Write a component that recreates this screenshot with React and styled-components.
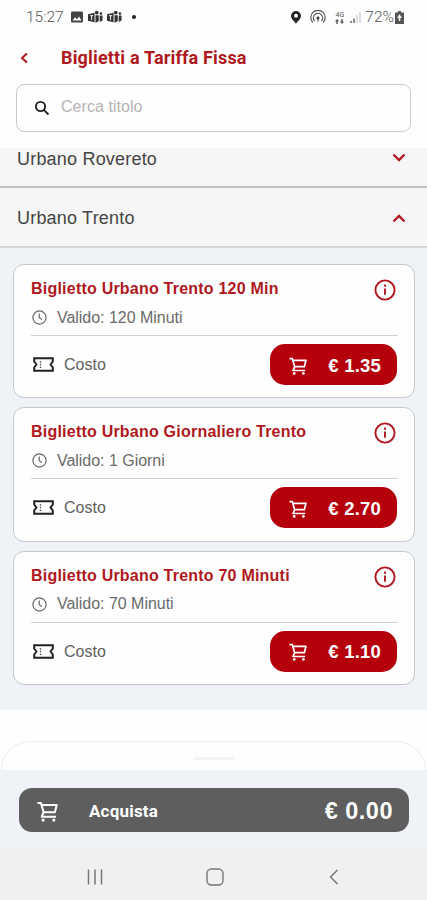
import React from 'react'
import styled, { createGlobalStyle } from 'styled-components'

const GlobalStyle = createGlobalStyle`
  * {
    box-sizing: border-box;
  }
  body {
    margin: 0;
    background: #fff;
    font-family: 'Liberation Sans', Arial, sans-serif;
  }
`

const Screen = styled.div`
  display: flex;
  flex-direction: column;
  width: 427px;
  height: 900px;
  overflow: hidden;
  background: #fefefe;
`

const StatusBar = styled.div`
  display: flex;
  align-items: center;
  justify-content: space-between;
  height: 34px;
  padding: 0 23px 0 26px;
  color: #777;
  font-family: Roboto, sans-serif;
  font-size: 15.5px;
`

const StatusGroup = styled.div`
  display: flex;
  align-items: center;
`

const Time = styled.span`
  width: 45px;
  font-weight: 300;
  color: #555;
`

const Battery = styled.span`
  margin: 0 1px 0 4px;
  font-weight: 300;
  font-size: 15.5px;
  color: #555;
`

const Header = styled.header`
  display: flex;
  align-items: center;
  height: 46px;
  padding: 1px 19px 0;
`

const Title = styled.h1`
  margin: 0 0 0 30px;
  color: #b01820;
  font-family: Roboto, sans-serif;
  font-size: 18px;
  font-weight: 700;
  line-height: 24px;
  letter-spacing: 0.17px;
`

const SearchBox = styled.div`
  display: flex;
  align-items: center;
  flex: none;
  height: 48px;
  margin: 4px 16px 0 16px;
  padding: 0 17px;
  border: 1.5px solid #ccc;
  border-radius: 8px;
  color: #b4b4b4;
  font-size: 16px;
  letter-spacing: 0.05px;

  svg {
    margin-right: 11px;
  }
  span {
    margin-top: -2px;
  }
`

const List = styled.main`
  display: flex;
  flex-direction: column;
  flex: none;
  height: 562px;
  margin-top: 16px;
  overflow: hidden;
  background: #eff3f7;
`

const Section = styled.div`
  display: flex;
  align-items: ${props => (props.$cut ? 'flex-start' : 'center')};
  justify-content: space-between;
  flex: none;
  height: ${props => (props.$cut ? 40 : 60)}px;
  padding: ${props => (props.$cut ? 1 : 2)}px 21px 0 17px;
  border-bottom: 2px solid ${props => (props.$cut ? '#bfc0c1' : '#d3d5d7')};
  background: #f6f6f6;
  color: #444;
  font-size: 18px;
  line-height: 20px;
  letter-spacing: 0.2px;
`

const SectionIcon = styled.span`
  display: flex;
  align-items: center;
  height: ${props => (props.$cut ? 17 : 20)}px;
`

const Cards = styled.div`
  display: flex;
  flex-direction: column;
  gap: 9px;
  padding: 16px 12px 0 13px;
`

const Card = styled.article`
  height: 134.4px;
  padding: 14px 16px 0 17px;
  border: 1.5px solid #c5c8ca;
  border-radius: 11px;
  background: #fefefe;
`

const CardHead = styled.div`
  display: flex;
  justify-content: space-between;
  height: 29px;

  svg {
    margin-right: 2px;
  }
`

const Name = styled.h2`
  margin: 0;
  color: #b01820;
  font-size: 16px;
  font-weight: 700;
  line-height: 20px;
  letter-spacing: 0.22px;
`

const Validity = styled.div`
  display: flex;
  align-items: center;
  height: 28px;
  padding-bottom: 8px;
  border-bottom: 1.5px solid #cfcfcf;
  color: #6a6a6a;
  font-size: 16px;
  letter-spacing: -0.03px;

  svg {
    margin: 0 10px 0 1px;
  }
`

const PriceRow = styled.div`
  display: flex;
  align-items: center;
  height: 41px;
  margin-top: 8px;
  padding: 0 1px 0 2px;
`

const CostLabel = styled.span`
  flex: 1;
  margin: 1px 0 0 10px;
  color: #606060;
  font-size: 16px;
`

const PriceButton = styled.button`
  display: flex;
  align-items: center;
  justify-content: space-between;
  width: 127px;
  height: 41px;
  padding: 2px 16px 0 19px;
  border: 0;
  border-radius: 15px;
  background: #b5000c;
  color: #fff;
  font-family: 'Liberation Sans', Arial, sans-serif;
  font-size: 18.5px;
  font-weight: 700;
  letter-spacing: 0.2px;
`

const Sheet = styled.div`
  display: flex;
  justify-content: center;
  flex: none;
  height: 29px;
  margin: 31px 1px 0;
  border: 1px solid #ededed;
  border-bottom: 0;
  border-radius: 29px 29px 0 0;
`

const Grip = styled.div`
  width: 42px;
  height: 3px;
  margin-top: 15px;
  border-radius: 2px;
  background: #f4f4f4;
`

const Footer = styled.footer`
  flex: none;
  height: 80px;
  padding: 18px 18px 0 19px;
  background: #eff3f7;
`

const BuyButton = styled.button`
  display: flex;
  align-items: center;
  width: 100%;
  height: 44px;
  padding: 2px 16px 0 18px;
  border: 0;
  border-radius: 13px;
  background: #5e5e5e;
  color: #fff;
`

const BuyLabel = styled.span`
  flex: 1;
  margin-left: 31px;
  font-family: Roboto, sans-serif;
  font-size: 17px;
  font-weight: 700;
  letter-spacing: 0.2px;
  text-align: left;
`

const Total = styled.span`
  font-family: 'Liberation Sans', Arial, sans-serif;
  font-size: 23.5px;
  font-weight: 700;
  letter-spacing: 0.5px;
`

const NavBar = styled.nav`
  display: flex;
  align-items: center;
  justify-content: space-between;
  flex: none;
  height: 50px;
  padding: 3px 87px 0 85px;
  background: #f0f0f0;

  svg:nth-child(2) {
    margin-right: 4px;
  }
`

const Chevron = ({ d, w, h, color = '#b01820', weight = 2 }) => (
  <svg width={w} height={h} viewBox={`0 0 ${w} ${h}`} fill='none' stroke={color} strokeWidth={weight}>
    <path d={d} />
  </svg>
)

const ChevronDown = () => <Chevron w={14} h={9} d='M1.5 1.5l5.500 5.500 5.500-5.500' weight={2.3} />
const ChevronUp = () => <Chevron w={14} h={9} d='M1.5 7.5l5.500-5.500 5.500 5.500' weight={2.3} />

const CartIcon = ({ size }) => (
  <svg width={size} height={size} viewBox='0 0 20 20' fill='none' stroke='#fff' strokeWidth='1.9'>
    <path d='M0.500 1.800h3.200l2.600 9h10.700l1.800-7H4.500M6.300 10.800l-1.800 4.200h13.500' strokeLinejoin='round' />
    <circle cx='5.800' cy='18.200' r='1.500' fill='#fff' stroke='none' />
    <circle cx='16' cy='18.200' r='1.500' fill='#fff' stroke='none' />
  </svg>
)

const TicketIcon = () => (
  <svg width='21' height='15' viewBox='0 0 21 15' fill='none' stroke='#222' strokeWidth='2'>
    <path d='M1.200 1.200h18.600v3.300l-2.200 3 2.200 3v3.300H1.200v-3.300l2.200-3-2.200-3z' />
    <path d='M7.500 4.200v1.500M7.500 6.800v1.500M7.500 9.400v1.500' stroke='#555' strokeWidth='1.400' />
  </svg>
)

const ClockIcon = () => (
  <svg width='15' height='15' viewBox='0 0 15 15' fill='none' stroke='#666' strokeWidth='1.2'>
    <circle cx='7.5' cy='7.5' r='6.6' />
    <path d='M7.2 3.5v4.2l2.8 1.9' />
  </svg>
)

const InfoIcon = () => (
  <svg width='22' height='22' viewBox='0 0 22 22' fill='none' stroke='#b01820' strokeWidth='1.9'>
    <circle cx='11' cy='11' r='9.6' />
    <path d='M11 9.5v6.3M11 5.6v2.1' />
  </svg>
)

const PhotoIcon = () => (
  <svg width='12' height='12' viewBox='0 0 12 12'>
    <rect y='0.5' width='12' height='11' rx='1.2' fill='#444' />
    <path d='M1.6 9.5l2.5-3.3 1.9 2 2-2.8 2.6 4.1z' fill='#fff' />
  </svg>
)

const TeamsIcon = () => (
  <svg width='15' height='14' viewBox='0 0 16 14' fill='#333'>
    <path d='M0 4l7-1.5v10L0 11z' />
    <circle cx='9.3' cy='2.2' r='2' />
    <circle cx='13.8' cy='3.2' r='1.4' />
    <path d='M8 5h3.5v6.2L8 13.5zM12.5 5.3H15.5v5.5l-3 1.5z' />
    <path d='M2 5.6h3.5M3.8 5.6v4.8' stroke='#fff' fill='none' />
  </svg>
)

const TeamsGroup = styled(StatusGroup)`
  gap: 4px;
  margin: 0 10px 0 5px;
`

const Dot = styled.i`
  width: 4px;
  height: 4px;
  border-radius: 50%;
  background: #222;
`

const PinIcon = () => (
  <svg width='10' height='13' viewBox='0 0 10 13'>
    <path d='M5 0a5 5 0 0 0-5 4.8C0 8 3.4 10 5 13c1.6-3 5-5 5-8.2A5 5 0 0 0 5 0z' fill='#222' />
    <circle cx='5' cy='4.7' r='2' fill='#fff' />
  </svg>
)

const HotspotIcon = () => (
  <svg width='16' height='14' viewBox='0 0 16 14' fill='none' stroke='#555' strokeWidth='1.2'>
    <path d='M2.800 12.500a7.200 7.200 0 1 1 10.400 0M4.600 11a4.600 4.600 0 1 1 6.800 0' />
    <circle cx='8' cy='8' r='1.5' fill='#333' stroke='none' />
    <path d='M8 8v3.500' />
  </svg>
)

const Network = styled.div`
  display: flex;
  flex-direction: column;
  align-items: center;
  width: 11px;
  margin-left: 8px;
  color: #555;
  font-size: 7px;
  line-height: 8px;
`

const ArrowsIcon = () => (
  <svg width='9' height='5' viewBox='0 0 9 5' fill='#555'>
    <path d='M0 2.500L2 0l2 2.500H2.700V5H1.300V2.500zM5 2.500L7 5l2-2.500H7.700V0H6.300v2.500z' />
  </svg>
)

const SignalIcon = () => (
  <svg width='12' height='13' viewBox='0 0 12 13'>
    <path d='M1 10h2v2H1zM4 7.5h2V12H4z' fill='#888' />
    <path d='M7 4h2v8H7zM10 1h2v11h-2z' fill='#ddd' />
  </svg>
)

const BatteryIcon = () => (
  <svg width='9' height='13' viewBox='0 0 9 13'>
    <path d='M3 0h3v1.5h3V13H0V1.5h3z' fill='#555' />
    <path d='M4.5 3L7 7H5.3v3H3.7V7H2z' fill='#eee' />
  </svg>
)

const RightStatus = styled(StatusGroup)`
  > svg + svg {
    margin-left: 9px;
  }
  > div + svg {
    margin-left: 4px;
  }
`

const tickets = [
  { name: 'Biglietto Urbano Trento 120 Min', validity: '120 Minuti', price: '1.35' },
  { name: 'Biglietto Urbano Giornaliero Trento', validity: '1 Giorni', price: '2.70' },
  { name: 'Biglietto Urbano Trento 70 Minuti', validity: '70 Minuti', price: '1.10' }
]

export default function App () {
  return (
    <Screen>
      <GlobalStyle />
      <StatusBar>
        <StatusGroup>
          <Time>15:27</Time>
          <PhotoIcon />
          <TeamsGroup>
            <TeamsIcon />
            <TeamsIcon />
          </TeamsGroup>
          <Dot />
        </StatusGroup>
        <RightStatus>
          <PinIcon />
          <HotspotIcon />
          <Network>
            <span>4G</span>
            <ArrowsIcon />
          </Network>
          <SignalIcon />
          <Battery>72%</Battery>
          <BatteryIcon />
        </RightStatus>
      </StatusBar>
      <Header>
        <Chevron w={12} h={12} d='M8 1.5L3 6l5 4.5' />
        <Title>Biglietti a Tariffa Fissa</Title>
      </Header>
      <SearchBox>
        <svg width='16' height='16' viewBox='0 0 16 16' fill='none' stroke='#222' strokeWidth='1.9'>
          <circle cx='6.5' cy='6.5' r='4.6' />
          <path d='M9.8 9.8l4.7 4.7' />
        </svg>
        <span>Cerca titolo</span>
      </SearchBox>
      <List>
        <Section $cut>
          Urbano Rovereto
          <SectionIcon $cut>
            <ChevronDown />
          </SectionIcon>
        </Section>
        <Section>
          Urbano Trento
          <SectionIcon>
            <ChevronUp />
          </SectionIcon>
        </Section>
        <Cards>
          {tickets.map(ticket => (
            <Card key={ticket.name}>
              <CardHead>
                <Name>{ticket.name}</Name>
                <InfoIcon />
              </CardHead>
              <Validity>
                <ClockIcon />
                Valido: {ticket.validity}
              </Validity>
              <PriceRow>
                <TicketIcon />
                <CostLabel>Costo</CostLabel>
                <PriceButton>
                  <CartIcon size={18} />
                  € {ticket.price}
                </PriceButton>
              </PriceRow>
            </Card>
          ))}
        </Cards>
      </List>
      <Sheet>
        <Grip />
      </Sheet>
      <Footer>
        <BuyButton>
          <CartIcon size={21} />
          <BuyLabel>Acquista</BuyLabel>
          <Total>€ 0.00</Total>
        </BuyButton>
      </Footer>
      <NavBar>
        <svg width='20' height='18' viewBox='0 0 20 18' stroke='#777' strokeWidth='1.5'>
          <path d='M3.5 1.5v15M10 1.5v15M16.5 1.5v15' />
        </svg>
        <svg width='18' height='18' viewBox='0 0 18 18' fill='none' stroke='#777' strokeWidth='1.4'>
          <rect x='1' y='1' width='16' height='16' rx='4.5' />
        </svg>
        <Chevron w={12} h={18} d='M9.5 2L2.5 9l7 7' color='#777' weight={1.5} />
      </NavBar>
    </Screen>
  )
}
